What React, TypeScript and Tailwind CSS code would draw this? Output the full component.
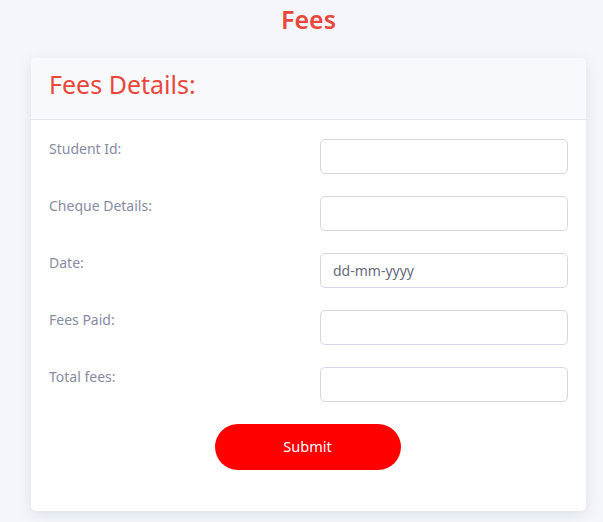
const fields = [
  { label: 'Student Id:', placeholder: '' },
  { label: 'Cheque Details:', placeholder: '' },
  { label: 'Date:', placeholder: 'dd-mm-yyyy' },
  { label: 'Fees Paid:', placeholder: '' },
  { label: 'Total fees:', placeholder: '' },
];

export default function App() {
  return (
    <div
      className="min-h-[522px] bg-[#f5f6fb] pl-[31px] pt-[3px]"
      style={{ fontFamily: '"Noto Sans", "Open Sans", sans-serif' }}
    >
      <div className="w-[555px]">
        <h1 className="text-center text-[25px] font-semibold leading-[32px] text-[#e8473c]">Fees</h1>

        <div className="mt-[23px] overflow-hidden rounded-[5px] bg-white shadow-[0_4px_14px_rgba(60,70,110,0.12)]">
          <div className="h-[62px] border-b border-[#e3e5ee] bg-[#f8f9fc] px-[18px] pt-[8px]">
            <h2 className="text-[25px] leading-[36px] text-[#e8473c]">Fees Details:</h2>
          </div>

          <form className="px-[18px] pt-[19px] pb-[41px]" onSubmit={(e) => e.preventDefault()}>
            <div className="flex flex-col gap-[22px]">
              {fields.map((f) => (
                <div key={f.label} className="flex items-start justify-between">
                  <label className="text-[14px] leading-[20px] text-[#878ba2]">{f.label}</label>
                  <input
                    type="text"
                    placeholder={f.placeholder}
                    className="h-[35px] w-[248px] rounded-[5px] border border-[#d6d6e6] bg-white px-[12px] text-[14px] text-[#555] outline-none placeholder:text-[#676b7c]"
                  />
                </div>
              ))}
            </div>

            <div className="mt-[22px] flex justify-center pr-[2px]">
              <button
                type="submit"
                className="h-[46px] w-[186px] rounded-full bg-[#ff0000] text-[14.5px] text-white"
              >
                Submit
              </button>
            </div>
          </form>
        </div>
      </div>
    </div>
  );
}
